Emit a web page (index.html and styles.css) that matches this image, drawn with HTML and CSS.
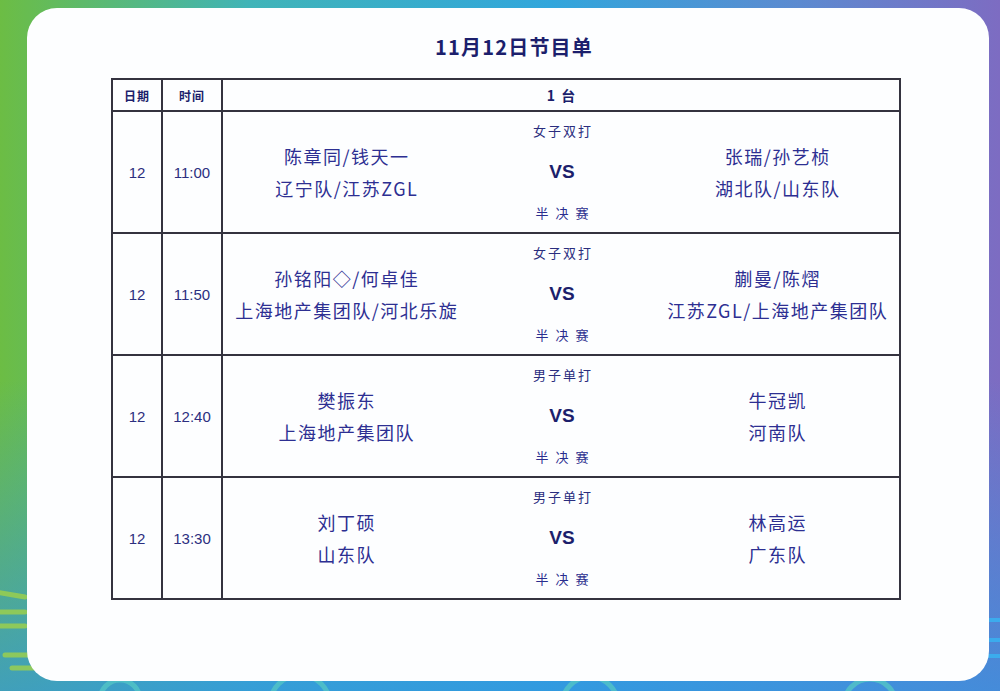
FILE: index.html
```html
<!DOCTYPE html>
<html lang="zh">
<head>
<meta charset="utf-8">
<link rel="stylesheet" href="styles.css">
</head>
<body>
<div class="bg-deco">
  <svg width="1000" height="691" viewBox="0 0 1000 691">
    <g fill="none" stroke="#9fd24a" stroke-width="5" stroke-linecap="round" opacity="0.8">
      <line x1="-5" y1="592" x2="25" y2="597"/>
      <line x1="-5" y1="612" x2="25" y2="612"/>
      <line x1="-5" y1="626" x2="25" y2="626"/>
      <line x1="5" y1="655" x2="60" y2="655"/>
      <line x1="12" y1="668" x2="90" y2="668"/>
    </g>
    <g fill="none" stroke="#52c4c6" stroke-width="5" opacity="0.8">
      <circle cx="120" cy="700" r="20"/>
      <circle cx="300" cy="705" r="30"/>
      <circle cx="590" cy="705" r="28"/>
      <circle cx="870" cy="705" r="26"/>
    </g>
    <g fill="none" stroke="#3ab0f0" stroke-width="4" opacity="0.9">
      <line x1="975" y1="620" x2="1000" y2="620"/>
      <line x1="975" y1="640" x2="1000" y2="640"/>
      <line x1="975" y1="656" x2="1000" y2="656"/>
    </g>
  </svg>
</div>
<main class="card">
  <h1 class="title">11月12日节目单</h1>
  <table class="schedule">
    <colgroup>
      <col class="c-date"><col class="c-time"><col class="c-main">
    </colgroup>
    <thead>
      <tr>
        <th class="h-small">日期</th>
        <th class="h-small">时间</th>
        <th class="h-table">1&nbsp;&nbsp;台</th>
      </tr>
    </thead>
    <tbody>
      <tr>
        <td class="num">12</td>
        <td class="num">11:00</td>
        <td>
          <div class="match">
            <div class="side"><div>陈章同/钱天一</div><div>辽宁队/江苏ZGL</div></div>
            <div class="mid"><div class="event">女子双打</div><div class="vs">VS</div><div class="round">半决赛</div></div>
            <div class="side"><div>张瑞/孙艺桢</div><div>湖北队/山东队</div></div>
          </div>
        </td>
      </tr>
      <tr>
        <td class="num">12</td>
        <td class="num">11:50</td>
        <td>
          <div class="match">
            <div class="side"><div>孙铭阳◇/何卓佳</div><div>上海地产集团队/河北乐旋</div></div>
            <div class="mid"><div class="event">女子双打</div><div class="vs">VS</div><div class="round">半决赛</div></div>
            <div class="side"><div>蒯曼/陈熠</div><div>江苏ZGL/上海地产集团队</div></div>
          </div>
        </td>
      </tr>
      <tr>
        <td class="num">12</td>
        <td class="num">12:40</td>
        <td>
          <div class="match">
            <div class="side"><div>樊振东</div><div>上海地产集团队</div></div>
            <div class="mid"><div class="event">男子单打</div><div class="vs">VS</div><div class="round">半决赛</div></div>
            <div class="side"><div>牛冠凯</div><div>河南队</div></div>
          </div>
        </td>
      </tr>
      <tr>
        <td class="num">12</td>
        <td class="num">13:30</td>
        <td>
          <div class="match">
            <div class="side"><div>刘丁硕</div><div>山东队</div></div>
            <div class="mid"><div class="event">男子单打</div><div class="vs">VS</div><div class="round">半决赛</div></div>
            <div class="side"><div>林高运</div><div>广东队</div></div>
          </div>
        </td>
      </tr>
    </tbody>
  </table>
</main>
</body>
</html>
```

FILE: styles.css
```css
html, body {
  margin: 0;
  padding: 0;
}
body {
  width: 1000px;
  height: 691px;
  overflow: hidden;
  position: relative;
  font-family: "Noto Sans CJK SC", "Noto Sans", sans-serif;
  background:
    linear-gradient(180deg, rgba(60,160,220,0) 55%, rgba(50,150,225,0.75) 100%),
    linear-gradient(90deg, #6cbd44 0%, #40b4b8 25%, #31a6dc 55%, #5c8ad0 80%, #7d6cc2 100%);
  display: flex;
  flex-direction: column;
}
.bg-deco {
  position: absolute;
  left: 0;
  top: 0;
  width: 1000px;
  height: 691px;
  z-index: 0;
}
.card {
  position: relative;
  z-index: 1;
  margin: 8px 11px 10px 27px;
  height: 673px;
  box-sizing: border-box;
  background: #fdfeff;
  border-radius: 30px;
  padding: 26px 88px 0 84px;
  display: flex;
  flex-direction: column;
  align-items: stretch;
}
.title {
  margin: 0;
  text-align: center;
  font-size: 20px;
  line-height: 26px;
  font-weight: 700;
  letter-spacing: 1.2px;
  color: #1c1f6c;
  padding-left: 16px;
}
.schedule {
  margin-top: 18px;
  width: 790px;
  border-collapse: collapse;
  table-layout: fixed;
  color: #2c2f8a;
}
.c-date { width: 50px; }
.c-time { width: 60px; }
.schedule th, .schedule td {
  border: 2px solid #34333f;
  padding: 0;
  text-align: center;
  vertical-align: middle;
}
.schedule thead tr { height: 32px; }
.h-small {
  font-size: 12px;
  font-weight: 700;
  color: #1c1f6c;
  letter-spacing: 1px;
}
.h-table {
  font-size: 14px;
  font-weight: 700;
  color: #1c1f6c;
}
.schedule tbody tr { height: 122px; }
.num {
  font-size: 15px;
  color: #2c2f80;
  font-family: "Liberation Sans", "Noto Sans", sans-serif;
}
.match {
  display: grid;
  grid-template-columns: 246px 186px 1fr;
  align-items: center;
  height: 118px;
}
.side {
  display: flex;
  flex-direction: column;
  align-items: center;
  gap: 6px;
  font-size: 18px;
  line-height: 26px;
  letter-spacing: 1.5px;
  padding-left: 1.5px;
  color: #2d2f92;
}
.mid {
  display: flex;
  flex-direction: column;
  align-items: center;
  justify-content: space-between;
  height: 100%;
  padding: 9px 0 9px;
  box-sizing: border-box;
}
.event {
  font-size: 13px;
  line-height: 18px;
  letter-spacing: 2px;
  padding-left: 2px;
  color: #2a2d7e;
}
.vs {
  font-family: "Liberation Sans", "Noto Sans", sans-serif;
  font-size: 19px;
  font-weight: 700;
  color: #1c1f6c;
  line-height: 20px;
}
.round {
  font-size: 13px;
  line-height: 18px;
  letter-spacing: 7px;
  padding-left: 7px;
  color: #2a2d8e;
}
```
